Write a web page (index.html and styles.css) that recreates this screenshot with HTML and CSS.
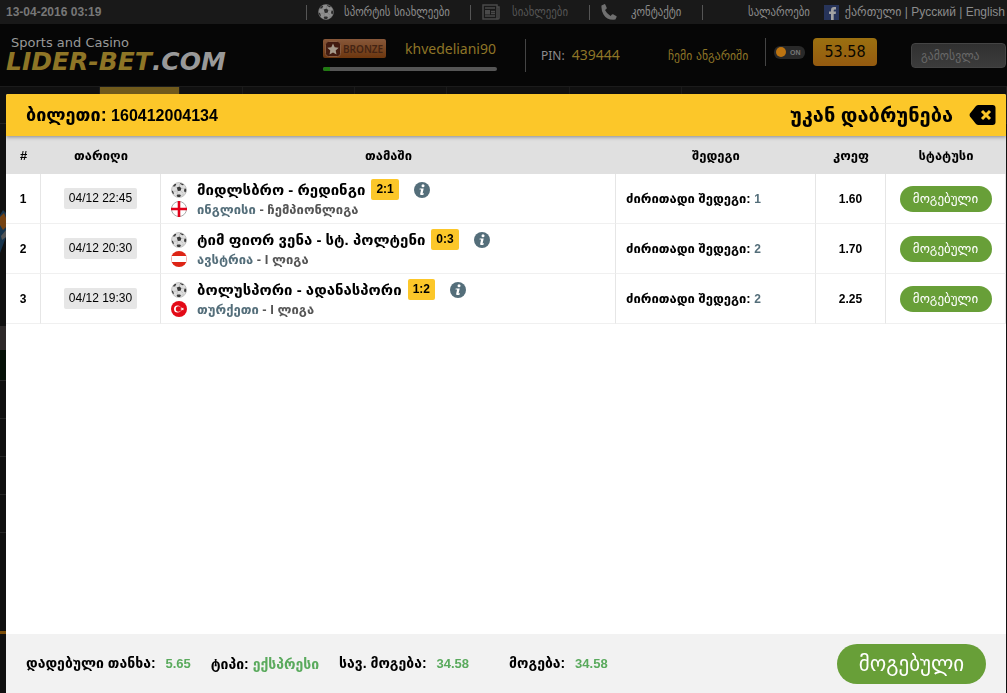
FILE: index.html
```
<!DOCTYPE html>
<html lang="ka">
<head>
  <meta charset="UTF-8" />
  <title>Lider-Bet</title>
  <link rel="stylesheet" href="styles.css">
</head>
<body>
  <svg class="sprite" aria-hidden="true">
    <symbol id="ball" viewBox="0 0 16 16">
      <circle cx="8" cy="8" r="7.5" fill="#dedede" stroke="#aaa" stroke-width="0.6" />
      <path d="M5.800 5.600l2.700-1 1.900 1.600-.8 2.600-2.800.2z M2.200 3.600l1.700-1.700 1.400.1-.8 1.700-1.800 1.200z M9 1l3 1 .9 1.100-1.400.1-2.200-1.200z M13.500 6.500l1.600.3.1 2.500-1.100 1.300-1.100-1.700z M.8 8.600l1.200.4.9 2.200-.5 1C1.300 11.200.8 10 .8 8.600z M6.400 12.600l2.700-.1.9 1.200-1.100 1.300-2.200-.1-1.100-1.100z" fill="#3a3a3a" />
      <path d="M8.600 4.200V1.900M10.400 6.200l2.300.2M9.600 8.900l2.300 2M6.800 9.100l-.9 2.800M5.800 5.600L3.800 4.400M2.500 9.300l3.400-.2M10.400 13.700l2.600-1.900" fill="none" stroke="#aaa" stroke-width="0.500" />
    </symbol>
    <symbol id="info" viewBox="0 0 16 16">
      <circle cx="8" cy="8" r="8" fill="#546e7a" />
      <circle cx="9" cy="3.800" r="1.500" fill="#fff" />
      <path d="M5.700 6.400h4L8.600 11.600l1.400-.4-.3 1.300c-1.300.7-3.900 1.200-3.500-.8l.9-4.100H5.500z" fill="#fff" />
    </symbol>
  </svg>

  <div class="topbar">
    <div class="clock">13-04-2016 03:19</div>
    <a href="#" class="top-item">
      <svg class="top-icon ball-icon"><use href="#ball" /></svg>
      <span>სპორტის სიახლეები</span>
    </a>
    <a href="#" class="top-item faded">
      <svg class="top-icon wide" viewBox="0 0 18 16">
        <path d="M1 1h14v14H1z M15 3h2v11q0 1-1 1h-1" fill="none" stroke="#4a4a4a" stroke-width="1.500" />
        <path d="M3 4h10M9 7.500h4M9 9.500h4M3 12h10" stroke="#4a4a4a" stroke-width="1.300" />
        <rect x="3" y="6" width="5" height="4.500" fill="#4a4a4a" />
      </svg>
      <span>სიახლეები</span>
    </a>
    <a href="#" class="top-item contact">
      <svg class="top-icon" viewBox="0 0 16 16"><path d="M.5 1.500L3.200.2q.8-.3 1.200.5l1.300 3q.2.800-.4 1.300L4 6.100q1.700 3.800 5.600 5.800l1.300-1.400q.5-.5 1.200-.2l3 1.600q.8.400.5 1.200l-1.200 2.500Q6 16.500 2.500 10.500 0 6 .5 1.500z" fill="#6f6f6f" /></svg>
      <span>კონტაქტი</span>
    </a>
    <div class="top-item right">
      <a href="#">სალაროები</a>
      <a href="#" class="fb" aria-label="Facebook"><svg viewBox="0 0 15 15"><rect width="15" height="15" fill="#27345a" /><path d="M7 15V9H5V6.500h2V5q0-3 3-3h2v2.400h-1.300q-1 0-1 1v1.100H12L11.700 9h-2v6z" fill="#a3a3a3" /></svg></a>
      <div class="langs"><a href="#">ქართული</a> | <a href="#">Русский</a> | <a href="#">English</a></div>
    </div>
  </div>

  <div class="header">
    <a href="#" class="logo">
      <span class="logo-sub">Sports and Casino</span>
      <span class="logo-name">LIDER-BET<b>.COM</b></span>
    </a>
    <div class="user">
      <div class="user-row">
        <span class="badge">
          <svg viewBox="0 0 16 16"><rect x="0.500" y="0.500" width="15" height="15" rx="3" fill="#421b10" stroke="#875b3f" /><path d="M8 2.500l1.700 3.700 4 .5-3 2.700.8 4L8 11.400l-3.500 2 .8-4-3-2.700 4-.5z" fill="#a69a8b" /></svg>
          BRONZE
        </span>
        <span class="username">khvedeliani90</span>
      </div>
      <div class="progress"><div class="progress-fill" style="width: 4%"></div></div>
    </div>
    <div class="pin">PIN: <span>439444</span></div>
    <a href="#" class="account">ჩემი ანგარიში</a>
    <div class="balance">
      <button class="toggle">ON</button>
      <span class="amount">53.58</span>
    </div>
    <button class="logout">გამოსვლა</button>
  </div>

  <div class="page">
    <div class="nav">
      <span></span><span class="active"></span><span></span><span></span><span></span><span></span><span></span><span></span>
    </div>
    <div class="side">
      <svg class="player" viewBox="0 0 6 45">
        <path d="M0 5l3-5 3 3v24l-3 8-3 8z" fill="#17344c" />
        <path d="M0 7l4-4 2 5v9l-3 3-3-5z" fill="#754313" />
        <path d="M1 26l5-6v7l-4 3z" fill="#555" />
      </svg>
      <div class="side-tab"></div>
      <div class="side-row green"></div>
      <div class="side-row"></div>
      <div class="side-row"></div>
      <div class="side-row"></div>
      <div class="side-row"></div>
      <div class="side-row last"></div>
    </div>
  </div>

  <div class="ticket">
    <div class="ticket-head">
      <h1><span>ბილეთი:</span> 160412004134</h1>
      <button class="back">
        უკან დაბრუნება
        <svg viewBox="0 0 26 20"><path d="M9 0h14q3 0 3 3v14q0 3-3 3H9q-1.500 0-2.500-1L.5 11.500q-1-1.500 0-3L6.500 1Q7.500 0 9 0z" fill="#000" /><path d="M12.500 6l8 8M20.500 6l-8 8" stroke="#fcc729" stroke-width="3" /></svg>
      </button>
    </div>

    <div class="ticket-body">
      <table>
        <thead>
          <tr>
            <th class="col-num">#</th>
            <th class="col-date">თარიღი</th>
            <th>თამაში</th>
            <th class="col-result">შედეგი</th>
            <th class="col-coef">კოეფ</th>
            <th class="col-status">სტატუსი</th>
          </tr>
        </thead>
        <tbody>
          <tr>
            <td>1</td>
            <td><span class="date">04/12 22:45</span></td>
            <td class="game">
              <div class="match">
                <svg class="icon"><use href="#ball" /></svg>
                <span>მიდლსბრო - რედინგი</span>
                <span class="score">2:1</span>
                <svg class="icon info"><use href="#info" /></svg>
              </div>
              <div class="league">
                <svg class="icon" viewBox="0 0 16 16"><circle cx="8" cy="8" r="7.500" fill="#fff" stroke="#aaa" /><path d="M8 0v16M0 8h16" stroke="#e2001a" stroke-width="2.600" /></svg>
                <div><b>ინგლისი</b> - ჩემპიონლიგა</div>
              </div>
            </td>
            <td class="result">ძირითადი შედეგი: <span>1</span></td>
            <td>1.60</td>
            <td><span class="status">მოგებული</span></td>
          </tr>
          <tr>
            <td>2</td>
            <td><span class="date">04/12 20:30</span></td>
            <td class="game">
              <div class="match">
                <svg class="icon"><use href="#ball" /></svg>
                <span>ტიმ ფიორ ვენა - სტ. პოლტენი</span>
                <span class="score">0:3</span>
                <svg class="icon info"><use href="#info" /></svg>
              </div>
              <div class="league">
                <svg class="icon" viewBox="0 0 16 16"><circle cx="8" cy="8" r="8" fill="#dd2415" /><path d="M.4 5h15.200v6H.4z" fill="#fff" /></svg>
                <div><b>ავსტრია</b> - I ლიგა</div>
              </div>
            </td>
            <td class="result">ძირითადი შედეგი: <span>2</span></td>
            <td>1.70</td>
            <td><span class="status">მოგებული</span></td>
          </tr>
          <tr>
            <td>3</td>
            <td><span class="date">04/12 19:30</span></td>
            <td class="game">
              <div class="match">
                <svg class="icon"><use href="#ball" /></svg>
                <span>ბოლუსპორი - ადანასპორი</span>
                <span class="score">1:2</span>
                <svg class="icon info"><use href="#info" /></svg>
              </div>
              <div class="league">
                <svg class="icon" viewBox="0 0 16 16"><circle cx="8" cy="8" r="8" fill="#e30a17" /><circle cx="6.500" cy="8" r="3.500" fill="#fff" /><circle cx="7.500" cy="8" r="2.700" fill="#e30a17" /><path d="M9 8l1.500-.5.1-1.500.9 1.200 1.500-.4-.9 1.200.9 1.200-1.500-.4-.9 1.200-.1-1.500z" fill="#fff" /></svg>
                <div><b>თურქეთი</b> - I ლიგა</div>
              </div>
            </td>
            <td class="result">ძირითადი შედეგი: <span>2</span></td>
            <td>2.25</td>
            <td><span class="status">მოგებული</span></td>
          </tr>
        </tbody>
      </table>
    </div>

    <div class="ticket-foot">
      <div class="sum">დადებული თანხა: <span class="num">5.65</span></div>
      <div class="sum">ტიპი: <span>ექსპრესი</span></div>
      <div class="sum wide">სავ. მოგება: <span class="num">34.58</span></div>
      <div class="sum">მოგება: <span class="num">34.58</span></div>
      <div class="total-status">მოგებული</div>
    </div>
  </div>
</body>
</html>
```
FILE: styles.css
```
body {
  margin: 0;
  min-height: 100vh;
  display: flex;
  flex-direction: column;
  overflow: hidden;
  background-color: #060606;
  color: #8c8c8c;
  font-family: "Liberation Sans", "DejaVu Sans", sans-serif;
  font-size: 12px;
}

a {
  color: inherit;
  text-decoration: none;
}

button {
  font-family: inherit;
  border: none;
  cursor: pointer;
  white-space: nowrap;
}

.sprite {
  display: none;
}

.topbar {
  display: grid;
  grid-template-columns: 306px 164px 119px 113px 1fr;
  height: 24px;
  align-items: center;
  background-color: #191919;
  white-space: nowrap;
}

.clock {
  padding-left: 6px;
  font-weight: bold;
  color: #777;
}

.top-item {
  display: flex;
  align-items: center;
  gap: 10px;
  height: 15px;
  padding-left: 11px;
  border-left: 1px solid #555;
  font-family: "DejaVu Sans Condensed", "DejaVu Sans", sans-serif;
  font-size: 12px;
}

.top-item.faded {
  gap: 12px;
  color: #555;
}

.top-item.contact {
  gap: 14px;
}

.top-item.right {
  justify-content: flex-end;
  padding-right: 2px;
}

.top-icon {
  flex: none;
  width: 16px;
  height: 16px;
}

.top-icon.wide {
  width: 18px;
}

.ball-icon {
  opacity: 0.6;
}

.fb svg {
  display: block;
  width: 15px;
  height: 15px;
  margin-left: 4px;
}

.langs {
  margin-left: -4px;
  font-family: "Liberation Sans", "DejaVu Sans", sans-serif;
}

.header {
  display: flex;
  align-items: center;
  height: 62px;
  white-space: nowrap;
}

.logo {
  width: 317px;
  padding-left: 6px;
  display: flex;
  flex-direction: column;
  font-family: "DejaVu Sans", sans-serif;
}

.logo-sub {
  padding-left: 5px;
  font-size: 13px;
  line-height: 12px;
  color: #999;
}

.logo-name {
  font-size: 25px;
  line-height: 25px;
  font-weight: bold;
  font-style: italic;
  color: #8e7526;
}

.logo-name b {
  color: #999;
}

.user {
  width: 174px;
  margin-right: 28px;
}

.user-row {
  display: flex;
  align-items: center;
  gap: 19px;
}

.badge {
  display: flex;
  align-items: center;
  gap: 2px;
  box-sizing: border-box;
  width: 63px;
  height: 19px;
  padding-left: 2px;
  border-radius: 2px;
  background: linear-gradient(#88583a, #6c360e);
  color: #442414;
  font-family: "Noto Sans", sans-serif;
  font-size: 10px;
  font-weight: 600;
}

.badge svg {
  width: 16px;
  height: 16px;
}

.username {
  font-family: "Noto Sans", sans-serif;
  font-size: 14px;
  line-height: 18px;
  color: #8e7526;
}

.progress {
  height: 4px;
  margin-top: 9px;
  border-radius: 2px;
  background-color: #555;
  overflow: hidden;
}

.progress-fill {
  height: 100%;
  background-color: #217a12;
}

.pin {
  width: 127px;
  padding-left: 15px;
  border-left: 1px solid #444;
  font-family: "Noto Sans", sans-serif;
  font-size: 12px;
  line-height: 32px;
}

.pin span {
  margin-left: 4px;
  font-size: 14px;
  color: #8e7526;
}

.account {
  width: 97px;
  color: #8e7526;
  font-family: "DejaVu Sans Condensed", "DejaVu Sans", sans-serif;
  font-size: 13px;
}

.balance {
  display: flex;
  align-items: center;
  gap: 8px;
  padding-left: 8px;
  margin-bottom: 6px;
  border-left: 1px solid #444;
}

.toggle {
  display: flex;
  align-items: center;
  gap: 4px;
  width: 31px;
  height: 13px;
  padding: 0 2px;
  border-radius: 6px;
  background-color: #292929;
  color: #777;
  font-size: 7px;
  font-weight: bold;
}

.toggle::before {
  content: "";
  width: 10px;
  height: 10px;
  border-radius: 50%;
  background-color: #bd7411;
}

.amount {
  width: 64px;
  border-radius: 4px;
  background: linear-gradient(#9b7010, #945a10);
  color: #080600;
  font-family: "DejaVu Sans Condensed", "DejaVu Sans", sans-serif;
  font-size: 16px;
  line-height: 28px;
  text-align: center;
}

.logout {
  box-sizing: border-box;
  width: 95px;
  height: 25px;
  margin: 0 1px 0 auto;
  padding: 0 9px;
  border: 1px solid #444;
  border-radius: 4px;
  background: linear-gradient(#303030, #3c3c3c);
  color: #696969;
  font-family: "DejaVu Sans Condensed", "DejaVu Sans", sans-serif;
  font-size: 13px;
  text-align: left;
}

.page {
  flex: 1;
  background-color: #101010;
}

.nav {
  display: grid;
  grid-template-columns: 100px 80px 63px 112px 92px 123px 112px 1fr;
  height: 36px;
  border-top: 1px solid #1b1b1b;
  border-bottom: 1px solid #222;
}

.nav span {
  border-right: 1px solid #1b1b1b;
}

.nav .active {
  background-color: #705a1c;
}

.side {
  width: 6px;
}

.player {
  display: block;
  width: 6px;
  height: 45px;
  margin: 86px 0 71px;
}

.side-tab {
  height: 24px;
  background-color: #2d2929;
}

.side-row {
  height: 37px;
  border-bottom: 1px solid #252525;
}

.side-row.green {
  height: 30px;
  background-color: #051006;
}

.side-row.last {
  height: 98px;
  border-bottom: 3px solid #7b4d09;
}

.ticket {
  position: fixed;
  top: 94px;
  right: 1px;
  bottom: 0;
  left: 6px;
  display: flex;
  flex-direction: column;
  border-radius: 2px 2px 0 0;
  background-color: #fff;
  color: #000;
  overflow: hidden;
}

.ticket-head {
  display: flex;
  align-items: center;
  justify-content: space-between;
  height: 42px;
  padding: 0 10px 0 20px;
  background-color: #fcc729;
  box-shadow: 0 1px 4px rgba(0, 0, 0, 0.4);
  z-index: 1;
}

.ticket-head h1 {
  margin: 0;
  font-size: 16px;
  line-height: 20px;
}

.ticket-head h1 span {
  font-size: 18px;
}

.back {
  display: flex;
  align-items: center;
  gap: 16px;
  padding: 0;
  background: none;
  color: #000;
  font-size: 20px;
  font-weight: bold;
}

.back svg {
  width: 27px;
  height: 20px;
}

.ticket-body {
  flex: 1;
}

table {
  width: 100%;
  table-layout: fixed;
  border-collapse: separate;
  border-spacing: 0;
  font-weight: bold;
  text-align: center;
}

th {
  height: 38px;
  padding: 0;
  background-color: #e0e0e0;
  font-size: 13px;
}

.col-num {
  width: 35px;
}

.col-date {
  width: 120px;
}

.col-result {
  width: 200px;
}

.col-coef {
  width: 70px;
}

.col-status {
  width: 120px;
}

td {
  box-sizing: border-box;
  height: 50px;
  padding: 0;
  border-right: 1px solid #e6e6e6;
  border-bottom: 1px solid #f0f0f0;
}

.date {
  display: inline-block;
  padding: 0 5px;
  border-radius: 2px;
  background-color: #e6e6e6;
  font-weight: normal;
  line-height: 21px;
}

td.game {
  padding-left: 10px;
  text-align: left;
}

.match,
.league {
  display: flex;
  align-items: center;
  white-space: nowrap;
}

.match {
  height: 21px;
  font-size: 15px;
}

.league {
  height: 18px;
  font-size: 13px;
  color: #555;
}

.league b {
  color: #546e7a;
}

.icon {
  flex: none;
  width: 16px;
  height: 16px;
  margin-right: 10px;
}

.icon.info {
  margin: 0 0 0 15px;
}

.score {
  margin-left: 6px;
  padding: 0 5px;
  border-radius: 2px;
  background-color: #fcc729;
  font-size: 12px;
  line-height: 21px;
}

td.result {
  padding-left: 10px;
  text-align: left;
  white-space: nowrap;
  font-size: 13px;
}

.result span {
  color: #546e7a;
  font-size: 12px;
}

.status {
  display: inline-block;
  width: 92px;
  border-radius: 13px;
  background-color: #689f38;
  color: #fff;
  font-size: 13px;
  font-weight: normal;
  line-height: 26px;
}

.ticket-foot {
  display: flex;
  align-items: center;
  gap: 20px;
  height: 59px;
  padding: 0 20px;
  background-color: #f2f2f2;
  font-size: 14px;
  font-weight: bold;
  line-height: 20px;
  white-space: nowrap;
}

.sum span {
  color: #5aaa5d;
}

.sum .num {
  margin-left: 6px;
  font-size: 13px;
}

.sum.wide {
  margin-right: 20px;
}

.total-status {
  width: 149px;
  margin-left: auto;
  border-radius: 20px;
  background-color: #689f38;
  color: #fff;
  font-size: 21px;
  font-weight: normal;
  line-height: 40px;
  text-align: center;
}
```
